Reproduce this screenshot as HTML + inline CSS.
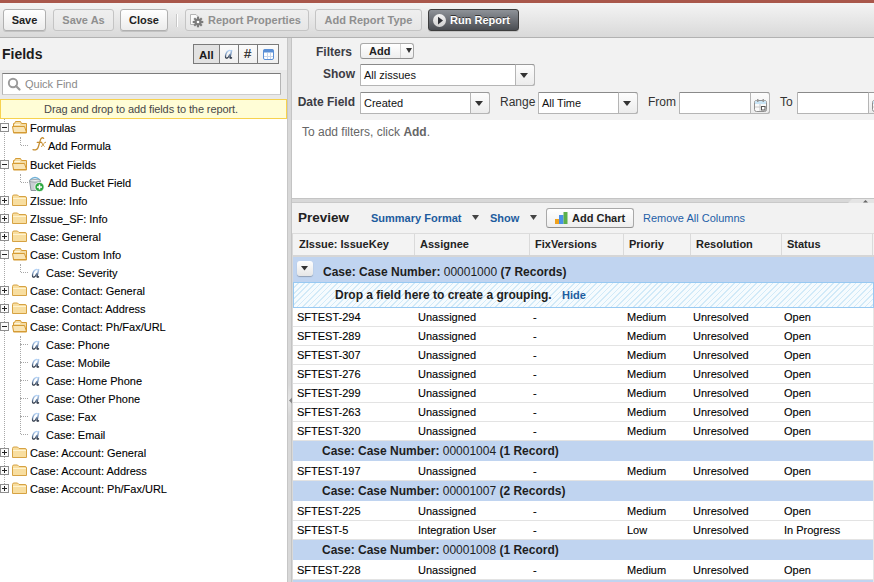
<!DOCTYPE html>
<html><head><meta charset="utf-8">
<style>
*{box-sizing:border-box;margin:0;padding:0}
html,body{width:874px;height:582px;overflow:hidden;background:#fff;font-family:"Liberation Sans",sans-serif;color:#000}
.a{position:absolute}
#red{left:0;top:0;width:874px;height:3px;background:#a9574b}
#tb{left:0;top:3px;width:874px;height:35px;background:linear-gradient(#f4f4f4,#d9d9d9);border-bottom:1px solid #b2b2b2}
.btn{position:absolute;top:9px;height:22px;border:1px solid #b0b0b0;border-radius:3px;background:linear-gradient(#ffffff,#ececec);font-size:11px;font-weight:bold;color:#222;line-height:20px;text-align:center;box-shadow:0 1px 0 rgba(0,0,0,.12)}
.btn.dis{color:#8f8f8f;border-color:#c4c4c4;background:linear-gradient(#efefef,#e6e6e6);box-shadow:none}
#left{left:0;top:38px;width:287px;height:544px;background:#fff}
#lhead{left:0;top:38px;width:287px;height:32px;background:#f2f2f2}
#qfwrap{left:0;top:70px;width:287px;height:29px;background:#e9e9e9}
#split{left:287px;top:38px;width:5px;height:544px;background:#d8d8d8;border-left:1px solid #c6c6c6;border-right:1px solid #c4c4c4}
.dotv{border-left:1px dotted #a8a8a8;width:1px}
.doth{border-top:1px dotted #a8a8a8;height:1px}
.ico-a{font-family:"Liberation Serif",serif;font-style:italic;font-size:15px;line-height:14px;color:#6d7f95;font-weight:bold}
.ico-fx{font-family:"Liberation Serif",serif;font-style:italic;font-size:14px;line-height:16px;color:#c48a3c}
.ico-fx span{font-size:10px;vertical-align:4px}
.lbl{font-size:12px;font-weight:bold;color:#3c3c44;line-height:14px}
.sbtn{border:1px solid #a9a9a9;border-bottom-color:#8f8f8f;border-radius:3px;background:linear-gradient(#fff,#eee)}
.sel{background:#fff;border:1px solid #b5b5b5;border-top-color:#8a8a8a;border-radius:0 3px 3px 0}
.selb{position:absolute;top:-1px;height:22px;border:1px solid #b5b5b5;border-top-color:#9a9a9a;border-radius:0 3px 3px 0;background:linear-gradient(#fdfdfd,#ececec)}
.lnk{font-size:11px;font-weight:bold;color:#1d5c9e;line-height:13px}
.th{font-size:11px;font-weight:bold;color:#222;line-height:13px}
.grp{left:293px;width:581px;background:#c0d4f0}
.gt{font-size:12px;font-weight:bold;color:#1e1e1e;line-height:14px;white-space:nowrap}
.td{font-size:11px;color:#000;line-height:13px;white-space:nowrap;-webkit-text-stroke:.1px #000}
.drop{left:293px;width:581px;border:1px solid #98c9f2;background:repeating-linear-gradient(135deg,#f6fbfe 0,#f6fbfe 2.8px,#d2eaf8 2.8px,#d2eaf8 3.9px)}
.tr{position:absolute;left:0;height:18px;font-size:11px;line-height:18px;white-space:nowrap;color:#000;-webkit-text-stroke:.1px #000}
</style></head><body>
<svg width="0" height="0" style="position:absolute"><defs><linearGradient id="ga" x1="0" y1="0" x2="0" y2="1"><stop offset="0" stop-color="#b5d3f5"/><stop offset=".5" stop-color="#7c98bd"/><stop offset="1" stop-color="#222a38"/></linearGradient>
<g id="aic"><path d="M6.8 2C5.5 0.8 2.8 1.6 1.8 5.4C1.1 8 1.7 9.3 2.7 9.2C3.9 9.1 5.2 7 6 5" fill="none" stroke="url(#ga)" stroke-width="1.3"/><path d="M7.8 1L6.1 8C5.8 9.3 6.6 9.5 7.9 8.4" fill="none" stroke="url(#ga)" stroke-width="1.4"/></g></defs></svg>
<div class="a" id="red"></div>
<div class="a" id="tb"></div>
<div class="btn" style="left:3px;width:43px">Save</div>
<div class="btn dis" style="left:53px;width:61px">Save As</div>
<div class="btn" style="left:120px;width:48px">Close</div>
<div class="a" style="left:176px;top:14px;width:1px;height:13px;background:#c8c8c8"></div>
<div class="a" style="left:177px;top:14px;width:1px;height:13px;background:#fff"></div>
<div class="btn dis" style="left:185px;width:124px;text-align:left;padding-left:22px">Report Properties</div>
<svg class="a" style="left:189px;top:13px" width="16" height="16"><path d="M1.5 1.5H7L9.5 4V11.5H1.5Z" fill="#fbfbfb" stroke="#b4b4b4"/><g transform="translate(9,9)" fill="#7c7c7c"><circle r="3.6"/><rect x="-1.1" y="-5.3" width="2.2" height="10.6"/><rect x="-5.3" y="-1.1" width="10.6" height="2.2"/><rect x="-1.1" y="-5.3" width="2.2" height="10.6" transform="rotate(45)"/><rect x="-1.1" y="-5.3" width="2.2" height="10.6" transform="rotate(-45)"/><circle r="1.3" fill="#fff"/></g></svg>
<div class="btn dis" style="left:315px;width:107px">Add Report Type</div>
<div class="btn" style="left:428px;width:91px;background:linear-gradient(#8e9298,#4a4d52);border-color:#3e3e3e;color:#fff;text-align:left;padding-left:21px;text-shadow:0 -1px 0 #333">Run Report</div>
<svg class="a" style="left:432px;top:13px" width="15" height="15"><defs><linearGradient id="gp" x1="0" y1="0" x2="0" y2="1"><stop offset="0" stop-color="#f4f4f4"/><stop offset="1" stop-color="#cfcfcf"/></linearGradient></defs><circle cx="7.5" cy="7.5" r="6.5" fill="url(#gp)"/><path d="M6 3.8L11 7.6L6 11.4Z" fill="#2f3137"/></svg>

<div class="a" id="left"></div>
<div class="a" id="lhead"></div>
<div class="a" style="left:2px;top:46px;font-size:14px;font-weight:bold;color:#1c1c1c;line-height:16px">Fields</div>
<div class="a" style="left:193px;top:44px;width:86px;height:20px;border:1px solid #7a7a7a;background:linear-gradient(#fbfbfb,#efefef)"></div>
<div class="a" style="left:194px;top:45px;width:25px;height:18px;background:#e2e2e2"></div>
<div class="a" style="left:219px;top:45px;width:1px;height:18px;background:#7a7a7a"></div>
<div class="a" style="left:238px;top:45px;width:1px;height:18px;background:#7a7a7a"></div>
<div class="a" style="left:257px;top:45px;width:1px;height:18px;background:#7a7a7a"></div>
<div class="a" style="left:199px;top:48px;font-size:11.5px;font-weight:bold;color:#1a1a1a;line-height:14px">All</div>
<svg class="a" style="left:224px;top:49px" width="10" height="10"><use href="#aic"/></svg>
<div class="a" style="left:244px;top:47px;font-size:13px;color:#111;line-height:14px;-webkit-text-stroke:.15px #111">#</div>
<svg class="a" style="left:263px;top:49px" width="11" height="11"><rect x="0.5" y="0.5" width="10" height="10" rx="1.5" fill="#fff" stroke="#5a8fd6"/><rect x="0.5" y="0.5" width="10" height="3" fill="#5a8fd6"/><path d="M1 7.5H10M4.5 4V10M7.5 4V10" stroke="#c9d6ea" stroke-width="1"/></svg>
<div class="a" id="qfwrap"></div>
<div class="a" style="left:2px;top:73px;width:279px;height:22px;background:#fff;border:1px solid #b4b4b4;border-top-color:#7c7c7c;border-bottom-color:#cdcdcd"></div>
<div class="a" style="left:25px;top:78px;font-size:11px;color:#8a8a8a;line-height:13px">Quick Find</div>
<svg class="a" style="left:7px;top:77px" width="14" height="14"><circle cx="6" cy="6" r="4.2" fill="none" stroke="#9a9a9a" stroke-width="1.9"/><path d="M9 9L12.5 12.5" stroke="#9a9a9a" stroke-width="2.2" stroke-linecap="round"/></svg>
<div class="a" style="left:0;top:99px;width:287px;height:20px;background:#fffdd6;border:1px solid #f7d24e;font-size:11px;color:#484848;text-align:center;line-height:18px;letter-spacing:-.1px;padding-right:5px">Drag and drop to add fields to the report.</div>


<div class="a dotv" style="left:4px;top:119px;height:365px"></div>
<svg class="a" style="left:0;top:123px" width="9" height="9"><rect x="0.5" y="0.5" width="8" height="8" fill="#fbfbfb" stroke="#8e8e8e"/><rect x="2" y="4" width="5" height="1" fill="#222"/></svg>
<svg class="a" style="left:12px;top:121px" width="16" height="13"><path d="M1.5 12V2.5H2.5L3.5 0.5H8.5L9.5 2.5H14.5V12Z" fill="#f4dca4" stroke="#d59b34"/><path d="M2.5 3.5H8" stroke="#fff6dc" stroke-width="1"/><path d="M0.5 5.5H12.5L14.5 11.5H1.5Z" fill="#f9e5b6" stroke="#d59b34"/></svg>
<div class="tr" style="left:30px;top:119px">Formulas</div>
<div class="a dotv" style="left:20px;top:137px;height:8px"></div>
<div class="a doth" style="left:21px;top:145px;width:7px"></div>
<svg class="a" style="left:30px;top:136px" width="18" height="16"><g fill="none" stroke="#c58d2f" stroke-linecap="round"><path d="M13.6 2.4C12.6 1.3 11.2 1.7 10.6 3.4L8.2 11.3C7.5 13.6 5.2 14.4 3 13.6" stroke-width="1.3"/><path d="M7.2 6.4H11.8" stroke-width="1.1"/><path d="M10.8 6.3C12.2 6 12.8 9.5 14.2 10.3M15.6 6.2C14 6.6 12.6 9 11.6 10.6" stroke-width="1"/></g></svg>
<div class="tr" style="left:48px;top:137px">Add Formula</div>
<svg class="a" style="left:0;top:160px" width="9" height="9"><rect x="0.5" y="0.5" width="8" height="8" fill="#fbfbfb" stroke="#8e8e8e"/><rect x="2" y="4" width="5" height="1" fill="#222"/></svg>
<svg class="a" style="left:12px;top:158px" width="16" height="13"><path d="M1.5 12V2.5H2.5L3.5 0.5H8.5L9.5 2.5H14.5V12Z" fill="#f4dca4" stroke="#d59b34"/><path d="M2.5 3.5H8" stroke="#fff6dc" stroke-width="1"/><path d="M0.5 5.5H12.5L14.5 11.5H1.5Z" fill="#f9e5b6" stroke="#d59b34"/></svg>
<div class="tr" style="left:30px;top:156px">Bucket Fields</div>
<div class="a dotv" style="left:20px;top:174px;height:8px"></div>
<div class="a doth" style="left:21px;top:182px;width:7px"></div>
<svg class="a" style="left:28px;top:176px" width="17" height="16"><path d="M2 4 Q7 -1 12 4" fill="none" stroke="#6fb0d6" stroke-width="1.3"/><path d="M1.5 4.5 H12.5 L11 14.5 H3 Z" fill="#c9ced3" stroke="#8c959c"/><ellipse cx="7" cy="4.8" rx="5.5" ry="1.3" fill="#e8ecef" stroke="#8c959c" stroke-width=".8"/><circle cx="11.5" cy="11" r="4.6" fill="#2aa63e" stroke="#fff" stroke-width=".8"/><rect x="9" y="10.3" width="5" height="1.5" fill="#fff"/><rect x="10.75" y="8.5" width="1.5" height="5" fill="#fff"/></svg>
<div class="tr" style="left:48px;top:174px">Add Bucket Field</div>
<svg class="a" style="left:0;top:196px" width="9" height="9"><rect x="0.5" y="0.5" width="8" height="8" fill="#fbfbfb" stroke="#8e8e8e"/><rect x="2" y="4" width="5" height="1" fill="#222"/><rect x="4" y="2" width="1" height="5" fill="#222"/></svg>
<svg class="a" style="left:12px;top:194px" width="15" height="12"><path d="M0.5 2.5 Q0.5 1 2 1 H5.5 L7 2.5 H13 Q14.5 2.5 14.5 4 V11.5 H0.5 Z" fill="#f8dea0" stroke="#d6a243"/><rect x="1" y="4" width="13" height="1" fill="#fff3d0"/></svg>
<div class="tr" style="left:30px;top:192px">ZIssue: Info</div>
<svg class="a" style="left:0;top:214px" width="9" height="9"><rect x="0.5" y="0.5" width="8" height="8" fill="#fbfbfb" stroke="#8e8e8e"/><rect x="2" y="4" width="5" height="1" fill="#222"/><rect x="4" y="2" width="1" height="5" fill="#222"/></svg>
<svg class="a" style="left:12px;top:212px" width="15" height="12"><path d="M0.5 2.5 Q0.5 1 2 1 H5.5 L7 2.5 H13 Q14.5 2.5 14.5 4 V11.5 H0.5 Z" fill="#f8dea0" stroke="#d6a243"/><rect x="1" y="4" width="13" height="1" fill="#fff3d0"/></svg>
<div class="tr" style="left:30px;top:210px">ZIssue_SF: Info</div>
<svg class="a" style="left:0;top:232px" width="9" height="9"><rect x="0.5" y="0.5" width="8" height="8" fill="#fbfbfb" stroke="#8e8e8e"/><rect x="2" y="4" width="5" height="1" fill="#222"/><rect x="4" y="2" width="1" height="5" fill="#222"/></svg>
<svg class="a" style="left:12px;top:230px" width="15" height="12"><path d="M0.5 2.5 Q0.5 1 2 1 H5.5 L7 2.5 H13 Q14.5 2.5 14.5 4 V11.5 H0.5 Z" fill="#f8dea0" stroke="#d6a243"/><rect x="1" y="4" width="13" height="1" fill="#fff3d0"/></svg>
<div class="tr" style="left:30px;top:228px">Case: General</div>
<svg class="a" style="left:0;top:250px" width="9" height="9"><rect x="0.5" y="0.5" width="8" height="8" fill="#fbfbfb" stroke="#8e8e8e"/><rect x="2" y="4" width="5" height="1" fill="#222"/></svg>
<svg class="a" style="left:12px;top:248px" width="16" height="13"><path d="M1.5 12V2.5H2.5L3.5 0.5H8.5L9.5 2.5H14.5V12Z" fill="#f4dca4" stroke="#d59b34"/><path d="M2.5 3.5H8" stroke="#fff6dc" stroke-width="1"/><path d="M0.5 5.5H12.5L14.5 11.5H1.5Z" fill="#f9e5b6" stroke="#d59b34"/></svg>
<div class="tr" style="left:30px;top:246px">Case: Custom Info</div>
<div class="a dotv" style="left:20px;top:264px;height:8px"></div>
<div class="a doth" style="left:21px;top:272px;width:7px"></div>
<svg class="a" style="left:31px;top:268px" width="10" height="10"><use href="#aic"/></svg>
<div class="tr" style="left:46px;top:264px">Case: Severity</div>
<svg class="a" style="left:0;top:286px" width="9" height="9"><rect x="0.5" y="0.5" width="8" height="8" fill="#fbfbfb" stroke="#8e8e8e"/><rect x="2" y="4" width="5" height="1" fill="#222"/><rect x="4" y="2" width="1" height="5" fill="#222"/></svg>
<svg class="a" style="left:12px;top:284px" width="15" height="12"><path d="M0.5 2.5 Q0.5 1 2 1 H5.5 L7 2.5 H13 Q14.5 2.5 14.5 4 V11.5 H0.5 Z" fill="#f8dea0" stroke="#d6a243"/><rect x="1" y="4" width="13" height="1" fill="#fff3d0"/></svg>
<div class="tr" style="left:30px;top:282px">Case: Contact: General</div>
<svg class="a" style="left:0;top:304px" width="9" height="9"><rect x="0.5" y="0.5" width="8" height="8" fill="#fbfbfb" stroke="#8e8e8e"/><rect x="2" y="4" width="5" height="1" fill="#222"/><rect x="4" y="2" width="1" height="5" fill="#222"/></svg>
<svg class="a" style="left:12px;top:302px" width="15" height="12"><path d="M0.5 2.5 Q0.5 1 2 1 H5.5 L7 2.5 H13 Q14.5 2.5 14.5 4 V11.5 H0.5 Z" fill="#f8dea0" stroke="#d6a243"/><rect x="1" y="4" width="13" height="1" fill="#fff3d0"/></svg>
<div class="tr" style="left:30px;top:300px">Case: Contact: Address</div>
<svg class="a" style="left:0;top:322px" width="9" height="9"><rect x="0.5" y="0.5" width="8" height="8" fill="#fbfbfb" stroke="#8e8e8e"/><rect x="2" y="4" width="5" height="1" fill="#222"/></svg>
<svg class="a" style="left:12px;top:320px" width="16" height="13"><path d="M1.5 12V2.5H2.5L3.5 0.5H8.5L9.5 2.5H14.5V12Z" fill="#f4dca4" stroke="#d59b34"/><path d="M2.5 3.5H8" stroke="#fff6dc" stroke-width="1"/><path d="M0.5 5.5H12.5L14.5 11.5H1.5Z" fill="#f9e5b6" stroke="#d59b34"/></svg>
<div class="tr" style="left:30px;top:318px">Case: Contact: Ph/Fax/URL</div>
<div class="a dotv" style="left:20px;top:336px;height:8px"></div>
<div class="a doth" style="left:21px;top:344px;width:7px"></div>
<svg class="a" style="left:31px;top:340px" width="10" height="10"><use href="#aic"/></svg>
<div class="tr" style="left:46px;top:336px">Case: Phone</div>
<div class="a dotv" style="left:20px;top:344px;height:18px"></div>
<div class="a doth" style="left:21px;top:362px;width:7px"></div>
<svg class="a" style="left:31px;top:358px" width="10" height="10"><use href="#aic"/></svg>
<div class="tr" style="left:46px;top:354px">Case: Mobile</div>
<div class="a dotv" style="left:20px;top:362px;height:18px"></div>
<div class="a doth" style="left:21px;top:380px;width:7px"></div>
<svg class="a" style="left:31px;top:376px" width="10" height="10"><use href="#aic"/></svg>
<div class="tr" style="left:46px;top:372px">Case: Home Phone</div>
<div class="a dotv" style="left:20px;top:380px;height:18px"></div>
<div class="a doth" style="left:21px;top:398px;width:7px"></div>
<svg class="a" style="left:31px;top:394px" width="10" height="10"><use href="#aic"/></svg>
<div class="tr" style="left:46px;top:390px">Case: Other Phone</div>
<div class="a dotv" style="left:20px;top:398px;height:18px"></div>
<div class="a doth" style="left:21px;top:416px;width:7px"></div>
<svg class="a" style="left:31px;top:412px" width="10" height="10"><use href="#aic"/></svg>
<div class="tr" style="left:46px;top:408px">Case: Fax</div>
<div class="a dotv" style="left:20px;top:416px;height:18px"></div>
<div class="a doth" style="left:21px;top:434px;width:7px"></div>
<svg class="a" style="left:31px;top:430px" width="10" height="10"><use href="#aic"/></svg>
<div class="tr" style="left:46px;top:426px">Case: Email</div>
<svg class="a" style="left:0;top:448px" width="9" height="9"><rect x="0.5" y="0.5" width="8" height="8" fill="#fbfbfb" stroke="#8e8e8e"/><rect x="2" y="4" width="5" height="1" fill="#222"/><rect x="4" y="2" width="1" height="5" fill="#222"/></svg>
<svg class="a" style="left:12px;top:446px" width="15" height="12"><path d="M0.5 2.5 Q0.5 1 2 1 H5.5 L7 2.5 H13 Q14.5 2.5 14.5 4 V11.5 H0.5 Z" fill="#f8dea0" stroke="#d6a243"/><rect x="1" y="4" width="13" height="1" fill="#fff3d0"/></svg>
<div class="tr" style="left:30px;top:444px">Case: Account: General</div>
<svg class="a" style="left:0;top:466px" width="9" height="9"><rect x="0.5" y="0.5" width="8" height="8" fill="#fbfbfb" stroke="#8e8e8e"/><rect x="2" y="4" width="5" height="1" fill="#222"/><rect x="4" y="2" width="1" height="5" fill="#222"/></svg>
<svg class="a" style="left:12px;top:464px" width="15" height="12"><path d="M0.5 2.5 Q0.5 1 2 1 H5.5 L7 2.5 H13 Q14.5 2.5 14.5 4 V11.5 H0.5 Z" fill="#f8dea0" stroke="#d6a243"/><rect x="1" y="4" width="13" height="1" fill="#fff3d0"/></svg>
<div class="tr" style="left:30px;top:462px">Case: Account: Address</div>
<svg class="a" style="left:0;top:484px" width="9" height="9"><rect x="0.5" y="0.5" width="8" height="8" fill="#fbfbfb" stroke="#8e8e8e"/><rect x="2" y="4" width="5" height="1" fill="#222"/><rect x="4" y="2" width="1" height="5" fill="#222"/></svg>
<svg class="a" style="left:12px;top:482px" width="15" height="12"><path d="M0.5 2.5 Q0.5 1 2 1 H5.5 L7 2.5 H13 Q14.5 2.5 14.5 4 V11.5 H0.5 Z" fill="#f8dea0" stroke="#d6a243"/><rect x="1" y="4" width="13" height="1" fill="#fff3d0"/></svg>
<div class="tr" style="left:30px;top:480px">Case: Account: Ph/Fax/URL</div>
<div class="a" style="left:292px;top:38px;width:582px;height:82px;background:#f2f2f2"></div>
<div class="a" style="left:292px;top:120px;width:582px;height:78px;background:#fff"></div>
<div class="a" style="left:292px;top:198px;width:582px;height:5px;background:#d8d8d8;border-top:1px solid #c4c4c4;border-bottom:1px solid #c9c9c9"></div>
<svg class="a" style="left:848px;top:199px" width="26" height="4"><path d="M0 4 L4 0 H26 V4 Z" fill="#e4e4e4"/><path d="M15 3.5 L17.5 1 L20 3.5 Z" fill="#666"/></svg>
<div class="a" style="left:292px;top:203px;width:582px;height:30px;background:#f2f2f2"></div>
<div class="a lbl" style="left:301px;width:51px;top:45px;text-align:right">Filters</div>
<div class="a lbl" style="left:300px;width:55px;top:67px;text-align:right">Show</div>
<div class="a lbl" style="left:290px;width:65px;top:95px;text-align:right">Date Field</div>
<div class="a sbtn" style="left:360px;top:43px;width:54px;height:16px"><span style="position:absolute;left:8px;top:0;line-height:14px;font-size:11px;font-weight:bold;color:#222">Add</span><div style="position:absolute;left:39px;top:0;width:1px;height:14px;background:#d2d2d2"></div><svg style="position:absolute;left:45px;top:4px" width="6" height="5"><path d="M0 0H6L3 5Z" fill="#333"/></svg></div>
<div class="a sel" style="left:360px;top:64px;width:175px;height:22px"><span style="position:absolute;left:3px;top:4px;font-size:11px;line-height:13px;color:#111">All zissues</span><div class="selb" style="left:154px;width:20px"></div><svg style="position:absolute;left:159px;top:8px" width="8" height="5"><path d="M0 0H8L4 5Z" fill="#333"/></svg></div>
<div class="a sel" style="left:360px;top:92px;width:130px;height:22px"><span style="position:absolute;left:3px;top:4px;font-size:11px;line-height:13px;color:#111">Created</span><div class="selb" style="left:109px;width:20px"></div><svg style="position:absolute;left:114px;top:8px" width="8" height="5"><path d="M0 0H8L4 5Z" fill="#333"/></svg></div>
<div class="a" style="left:500px;top:95px;font-size:12px;color:#333;line-height:14px">Range</div>
<div class="a sel" style="left:538px;top:92px;width:100px;height:22px"><span style="position:absolute;left:3px;top:4px;font-size:11px;line-height:13px;color:#111">All Time</span><div class="selb" style="left:79px;width:20px"></div><svg style="position:absolute;left:84px;top:8px" width="8" height="5"><path d="M0 0H8L4 5Z" fill="#333"/></svg></div>
<div class="a" style="left:648px;top:95px;font-size:12px;color:#333;line-height:14px">From</div>
<div class="a sel" style="left:679px;top:92px;width:91px;height:22px"><div class="selb" style="left:70px;width:20px"></div><svg style="position:absolute;left:74px;top:6px" width="13" height="13"><rect x="0.5" y="1.5" width="12" height="11" rx="2" fill="#fafafa" stroke="#8f8f8f"/><rect x="1" y="2" width="11" height="3" fill="#c9e4f5"/><rect x="3" y="0" width="1.5" height="3" fill="#999"/><rect x="8.5" y="0" width="1.5" height="3" fill="#999"/><path d="M1 8H12M6 5V12" stroke="#c8c8c8" stroke-width="1"/><rect x="7.5" y="7.5" width="3.5" height="3.5" fill="#fff" stroke="#555"/></svg></div>
<div class="a" style="left:780px;top:95px;font-size:12px;color:#333;line-height:14px">To</div>
<div class="a sel" style="left:797px;top:92px;width:91px;height:22px"><div class="selb" style="left:70px;width:20px"></div><svg style="position:absolute;left:74px;top:6px" width="13" height="13"><rect x="0.5" y="1.5" width="12" height="11" rx="2" fill="#fafafa" stroke="#8f8f8f"/><rect x="1" y="2" width="11" height="3" fill="#c9e4f5"/><rect x="3" y="0" width="1.5" height="3" fill="#999"/><rect x="8.5" y="0" width="1.5" height="3" fill="#999"/><path d="M1 8H12M6 5V12" stroke="#c8c8c8" stroke-width="1"/><rect x="7.5" y="7.5" width="3.5" height="3.5" fill="#fff" stroke="#555"/></svg></div>
<div class="a" style="left:302px;top:125px;font-size:12px;color:#666;line-height:14px">To add filters, click <b>Add</b>.</div>
<div class="a" style="left:298px;top:210px;font-size:13.5px;font-weight:bold;color:#222;line-height:16px">Preview</div>
<div class="a lnk" style="left:371px;top:212px">Summary Format</div>
<svg class="a" style="left:472px;top:215px" width="7" height="5"><path d="M0 0H7L3.5 5Z" fill="#444"/></svg>
<div class="a lnk" style="left:490px;top:212px">Show</div>
<svg class="a" style="left:530px;top:215px" width="7" height="5"><path d="M0 0H7L3.5 5Z" fill="#444"/></svg>
<div class="a sbtn" style="left:546px;top:208px;width:88px;height:20px"><svg style="position:absolute;left:8px;top:3px" width="13" height="12"><rect x="0" y="7" width="4" height="5" fill="#f0a21e"/><rect x="4" y="3" width="4.5" height="9" fill="#4a90e8"/><rect x="8.5" y="0" width="4" height="12" fill="#5cb04a"/></svg><span style="position:absolute;left:25px;top:2px;line-height:14px;font-size:11px;font-weight:bold;color:#222">Add Chart</span></div>
<div class="a" style="left:643px;top:212px;font-size:11px;color:#1f5fa8;line-height:13px">Remove All Columns</div>
<div class="a" style="left:293px;top:233px;width:581px;height:24px;background:#f3f3f3;border-top:1px solid #dcdcdc;border-bottom:2px solid #d6d6d6"></div>
<div class="a" style="left:292px;top:233px;width:1px;height:349px;background:#d9d9d9"></div>
<div class="a th" style="left:299px;top:238px">ZIssue: IssueKey</div>
<div class="a th" style="left:420px;top:238px">Assignee</div>
<div class="a th" style="left:535px;top:238px">FixVersions</div>
<div class="a th" style="left:629px;top:238px">Prioriy</div>
<div class="a th" style="left:696px;top:238px">Resolution</div>
<div class="a th" style="left:787px;top:238px">Status</div>
<div class="a" style="left:414px;top:234px;width:1px;height:21px;background:#dadada"></div>
<div class="a" style="left:529px;top:234px;width:1px;height:21px;background:#dadada"></div>
<div class="a" style="left:623px;top:234px;width:1px;height:21px;background:#dadada"></div>
<div class="a" style="left:690px;top:234px;width:1px;height:21px;background:#dadada"></div>
<div class="a" style="left:781px;top:234px;width:1px;height:21px;background:#dadada"></div>
<div class="a" style="left:872px;top:234px;width:1px;height:21px;background:#dadada"></div>
<div class="a grp" style="top:257px;height:25px"></div>
<div class="a gt" style="left:323px;top:265px">Case: Case Number: <span style="font-weight:normal">00001000</span> (7 Records)</div>
<div class="a" style="left:297px;top:261px;width:16px;height:15px;border-radius:3px;background:linear-gradient(#fefefe,#e6e6e6);box-shadow:0 1px 1px rgba(0,0,0,.25)"><svg style="position:absolute;left:4px;top:5px" width="7" height="5"><path d="M0 0H7L3.5 4.5Z" fill="#333"/></svg></div>
<div class="a drop" style="top:282px;height:26px"></div>
<div class="a gt" style="left:335px;top:288px">Drop a field here to create a grouping.</div>
<div class="a lnk" style="left:562px;top:289px">Hide</div>
<div class="a" style="left:293px;top:326px;width:581px;height:1px;background:#e3e3e3"></div>
<div class="a td" style="left:297px;top:311px">SFTEST-294</div>
<div class="a td" style="left:418px;top:311px">Unassigned</div>
<div class="a td" style="left:533px;top:311px">-</div>
<div class="a td" style="left:627px;top:311px">Medium</div>
<div class="a td" style="left:693px;top:311px">Unresolved</div>
<div class="a td" style="left:784px;top:311px">Open</div>
<div class="a" style="left:293px;top:345px;width:581px;height:1px;background:#e3e3e3"></div>
<div class="a td" style="left:297px;top:330px">SFTEST-289</div>
<div class="a td" style="left:418px;top:330px">Unassigned</div>
<div class="a td" style="left:533px;top:330px">-</div>
<div class="a td" style="left:627px;top:330px">Medium</div>
<div class="a td" style="left:693px;top:330px">Unresolved</div>
<div class="a td" style="left:784px;top:330px">Open</div>
<div class="a" style="left:293px;top:364px;width:581px;height:1px;background:#e3e3e3"></div>
<div class="a td" style="left:297px;top:349px">SFTEST-307</div>
<div class="a td" style="left:418px;top:349px">Unassigned</div>
<div class="a td" style="left:533px;top:349px">-</div>
<div class="a td" style="left:627px;top:349px">Medium</div>
<div class="a td" style="left:693px;top:349px">Unresolved</div>
<div class="a td" style="left:784px;top:349px">Open</div>
<div class="a" style="left:293px;top:383px;width:581px;height:1px;background:#e3e3e3"></div>
<div class="a td" style="left:297px;top:368px">SFTEST-276</div>
<div class="a td" style="left:418px;top:368px">Unassigned</div>
<div class="a td" style="left:533px;top:368px">-</div>
<div class="a td" style="left:627px;top:368px">Medium</div>
<div class="a td" style="left:693px;top:368px">Unresolved</div>
<div class="a td" style="left:784px;top:368px">Open</div>
<div class="a" style="left:293px;top:402px;width:581px;height:1px;background:#e3e3e3"></div>
<div class="a td" style="left:297px;top:387px">SFTEST-299</div>
<div class="a td" style="left:418px;top:387px">Unassigned</div>
<div class="a td" style="left:533px;top:387px">-</div>
<div class="a td" style="left:627px;top:387px">Medium</div>
<div class="a td" style="left:693px;top:387px">Unresolved</div>
<div class="a td" style="left:784px;top:387px">Open</div>
<div class="a" style="left:293px;top:421px;width:581px;height:1px;background:#e3e3e3"></div>
<div class="a td" style="left:297px;top:406px">SFTEST-263</div>
<div class="a td" style="left:418px;top:406px">Unassigned</div>
<div class="a td" style="left:533px;top:406px">-</div>
<div class="a td" style="left:627px;top:406px">Medium</div>
<div class="a td" style="left:693px;top:406px">Unresolved</div>
<div class="a td" style="left:784px;top:406px">Open</div>
<div class="a" style="left:293px;top:440px;width:581px;height:1px;background:#e3e3e3"></div>
<div class="a td" style="left:297px;top:425px">SFTEST-320</div>
<div class="a td" style="left:418px;top:425px">Unassigned</div>
<div class="a td" style="left:533px;top:425px">-</div>
<div class="a td" style="left:627px;top:425px">Medium</div>
<div class="a td" style="left:693px;top:425px">Unresolved</div>
<div class="a td" style="left:784px;top:425px">Open</div>
<div class="a grp" style="top:441px;height:20px"></div>
<div class="a gt" style="left:322px;top:444px">Case: Case Number: <span style="font-weight:normal">00001004</span> (1 Record)</div>
<div class="a" style="left:293px;top:480px;width:581px;height:1px;background:#e3e3e3"></div>
<div class="a td" style="left:297px;top:465px">SFTEST-197</div>
<div class="a td" style="left:418px;top:465px">Unassigned</div>
<div class="a td" style="left:533px;top:465px">-</div>
<div class="a td" style="left:627px;top:465px">Medium</div>
<div class="a td" style="left:693px;top:465px">Unresolved</div>
<div class="a td" style="left:784px;top:465px">Open</div>
<div class="a grp" style="top:481px;height:20px"></div>
<div class="a gt" style="left:322px;top:484px">Case: Case Number: <span style="font-weight:normal">00001007</span> (2 Records)</div>
<div class="a" style="left:293px;top:520px;width:581px;height:1px;background:#e3e3e3"></div>
<div class="a td" style="left:297px;top:505px">SFTEST-225</div>
<div class="a td" style="left:418px;top:505px">Unassigned</div>
<div class="a td" style="left:533px;top:505px">-</div>
<div class="a td" style="left:627px;top:505px">Medium</div>
<div class="a td" style="left:693px;top:505px">Unresolved</div>
<div class="a td" style="left:784px;top:505px">Open</div>
<div class="a" style="left:293px;top:539px;width:581px;height:1px;background:#e3e3e3"></div>
<div class="a td" style="left:297px;top:524px">SFTEST-5</div>
<div class="a td" style="left:418px;top:524px">Integration User</div>
<div class="a td" style="left:533px;top:524px">-</div>
<div class="a td" style="left:627px;top:524px">Low</div>
<div class="a td" style="left:693px;top:524px">Unresolved</div>
<div class="a td" style="left:784px;top:524px">In Progress</div>
<div class="a grp" style="top:540px;height:20px"></div>
<div class="a gt" style="left:322px;top:543px">Case: Case Number: <span style="font-weight:normal">00001008</span> (1 Record)</div>
<div class="a" style="left:293px;top:579px;width:581px;height:1px;background:#e3e3e3"></div>
<div class="a td" style="left:297px;top:564px">SFTEST-228</div>
<div class="a td" style="left:418px;top:564px">Unassigned</div>
<div class="a td" style="left:533px;top:564px">-</div>
<div class="a td" style="left:627px;top:564px">Medium</div>
<div class="a td" style="left:693px;top:564px">Unresolved</div>
<div class="a td" style="left:784px;top:564px">Open</div>
<div class="a grp" style="top:580px;height:2px"></div>
<div class="a" style="left:873px;top:308px;width:1px;height:274px;background:#e6e6e6"></div>
<div class="a" id="split"></div>
<div class="a" style="left:288px;top:384px;width:3px;height:32px;background:linear-gradient(#d8d8d8,#e6e6e6 50%,#d8d8d8)"></div>
<svg class="a" style="left:289px;top:397px" width="4" height="7"><path d="M0 3.5L3 0.5V6.5Z" fill="#888"/></svg>

</body></html>
